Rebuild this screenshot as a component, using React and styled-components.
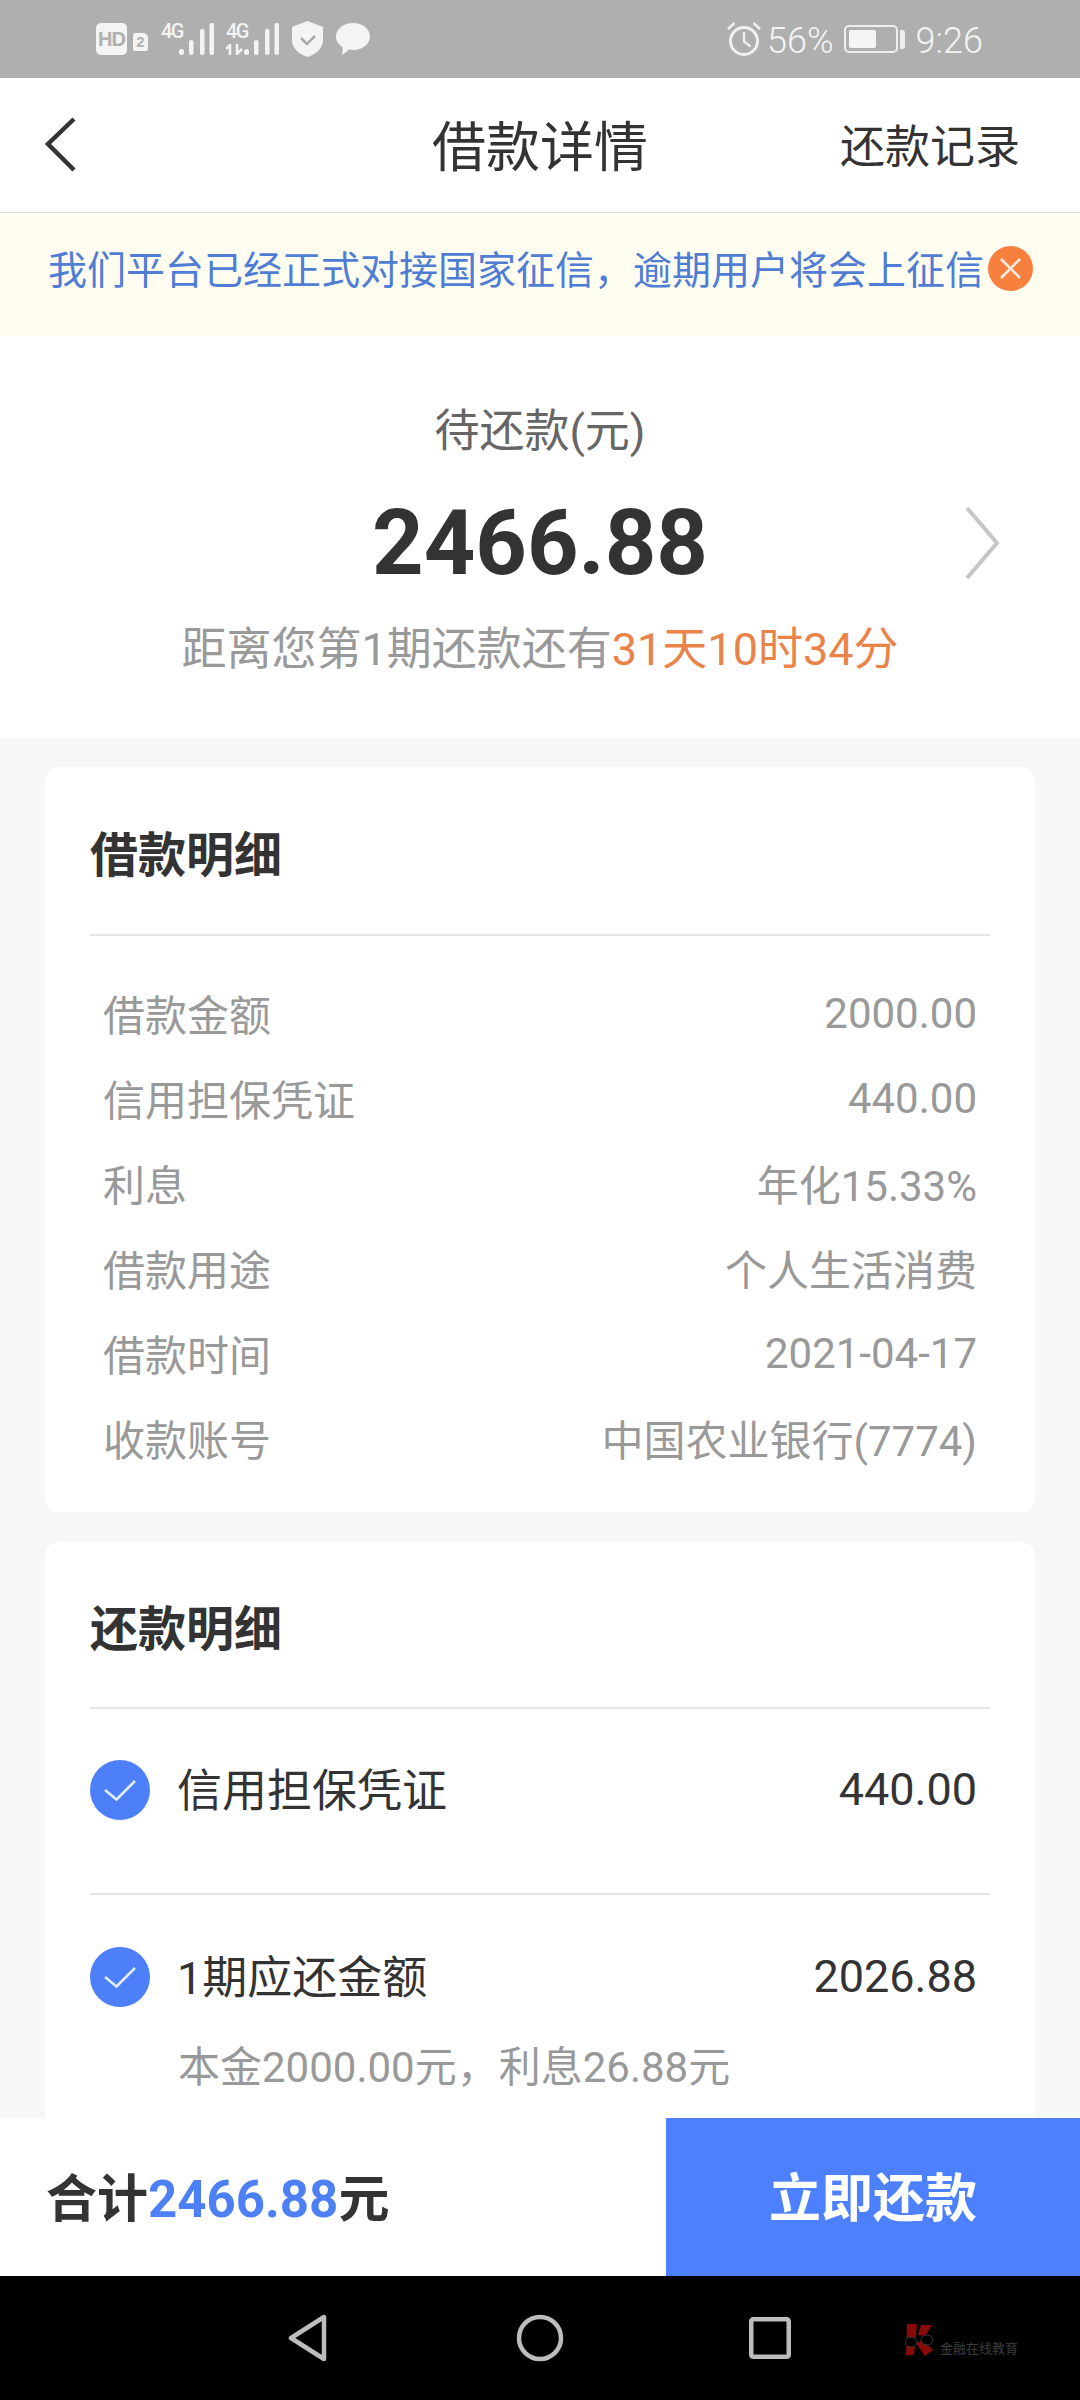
import React from 'react';
import styled, { createGlobalStyle } from 'styled-components';

const FONT = `Roboto, "Noto Sans CJK SC", sans-serif`;

const GlobalStyle = createGlobalStyle`
  html, body {
    margin: 0;
    padding: 0;
    background: #f7f7f7;
  }
  * {
    box-sizing: border-box;
  }
`;

const Page = styled.div`
  width: 1080px;
  height: 2400px;
  display: flex;
  flex-direction: column;
  overflow: hidden;
  font-family: ${FONT};
  background: #f7f7f7;
`;

/* status bar */
const StatusBar = styled.div`
  flex: none;
  height: 78px;
  padding: 0 97px 0 96px;
  display: flex;
  align-items: center;
  justify-content: space-between;
  background: #afafaf;
  color: #f4f4f4;
`;

const StatusGroup = styled.div`
  display: flex;
  align-items: center;
`;

const HdBadge = styled.span`
  width: 31px;
  height: 32px;
  border-radius: 5px;
  background: #f4f4f4;
  color: #afafaf;
  font: 700 20px/32px "Liberation Sans", sans-serif;
  text-align: center;
  letter-spacing: -1px;
`;

const SimBadge = styled.span`
  width: 15px;
  height: 18px;
  margin: 6px 13px 0 6px;
  border-radius: 2px 5px 2px 2px;
  background: #f4f4f4;
  color: #afafaf;
  font: 700 15px/18px "Liberation Sans", sans-serif;
  text-align: center;
`;

const SignalWrap = styled.div`
  display: flex;
  margin-left: ${p => p.$gap || 0}px;
`;

const NetLabel = styled.div`
  width: 18px;
  height: 33px;
  display: flex;
  flex-direction: column;
`;

const NetText = styled.span`
  font-size: 20px;
  line-height: 16px;
  font-weight: 500;
  letter-spacing: -1.5px;
  white-space: nowrap;
`;

const NetArrows = styled.svg`
  display: block;
  margin-top: 5px;
`;

const StatusIcon = styled.svg`
  display: block;
  flex: none;
  margin-left: ${p => p.$gap || 0}px;
`;

const BatteryText = styled.span`
  margin: 3px 10px 0 5px;
  font-size: 36px;
  line-height: 44px;
  font-weight: 300;
`;

const Battery = styled.div`
  width: 54px;
  height: 28px;
  padding: 3px;
  border: 2px solid #eeeeee;
  border-radius: 5px;
`;

const BatteryFill = styled.div`
  width: ${p => p.$level}%;
  height: 100%;
  background: #f4f4f4;
  border-radius: 2px;
`;

const BatteryNub = styled.div`
  width: 5px;
  height: 19px;
  margin-left: 2px;
  background: #f0f0f0;
  border-radius: 0 3px 3px 0;
`;

const Clock = styled.span`
  margin: 3px 0 0 11px;
  font-size: 36px;
  line-height: 44px;
  font-weight: 300;
`;

/* top bar */
const Header = styled.header`
  flex: none;
  height: 135px;
  display: grid;
  grid-template-columns: 1fr auto 1fr;
  align-items: center;
  background: #fff;
  border-bottom: 1px solid #dcdcdc;
`;

const BackIcon = styled.svg`
  display: block;
  margin-left: 44px;
`;

const Title = styled.h1`
  margin: 8px 0 0;
  font-size: 54px;
  line-height: 70px;
  font-weight: 400;
  color: #333;
`;

const RecordLink = styled.span`
  justify-self: end;
  margin: 6px 60px 0 0;
  font-size: 45px;
  line-height: 60px;
  color: #333;
`;

/* notice */
const Notice = styled.div`
  flex: none;
  height: 122px;
  padding: 0 0 12px 48px;
  display: flex;
  align-items: center;
  background: #fffdf0;
`;

const NoticeText = styled.span`
  margin-top: 5px;
  font-size: 39px;
  line-height: 50px;
  color: #4f7dd4;
`;

const CloseIcon = styled.svg`
  display: block;
  flex: none;
  margin-left: 4px;
`;

/* amount summary */
const Summary = styled.section`
  flex: none;
  position: relative;
  height: 403px;
  padding-top: 69px;
  display: flex;
  flex-direction: column;
  align-items: center;
  background: #fff;
`;

const SummaryLabel = styled.div`
  font-size: 45px;
  line-height: 56px;
  color: #666;
`;

const Amount = styled.div`
  margin-top: 29px;
  font-size: 90px;
  line-height: 110px;
  font-weight: 700;
  color: #333;
`;

const Countdown = styled.div`
  margin-top: 21px;
  font-size: 45px;
  line-height: 60px;
  color: #999;
`;

const CountdownValue = styled.span`
  color: #e9834a;
`;

const ForwardIcon = styled.svg`
  position: absolute;
  left: 964px;
  top: 170px;
`;

/* cards */
const Content = styled.main`
  flex: 1;
  min-height: 0;
  overflow: hidden;
  padding: 29px 45px 0;
  display: flex;
  flex-direction: column;
  gap: 30px;
`;

const Card = styled.section`
  flex: none;
  padding: 0 45px;
  background: #fff;
  border-radius: 14px;
`;

const CardTitle = styled.h2`
  margin: 0;
  height: ${p => p.$height}px;
  padding-top: 10px;
  display: flex;
  align-items: center;
  border-bottom: 2px solid #e5e5e5;
  font-size: 48px;
  line-height: 60px;
  font-weight: 700;
  color: #333;
`;

const DetailList = styled.div`
  padding: 38px 13px 28px;
`;

const DetailRow = styled.div`
  height: 85px;
  display: flex;
  align-items: center;
  justify-content: space-between;
  font-size: 42px;
  line-height: 56px;
  color: #999;
`;

/* plain numbers sit a little higher than the CJK text beside them */
const DetailValue = styled.span`
  margin-bottom: ${p => (p.$numeric ? '6px' : '0')};
`;

const RepayRow = styled.div`
  padding: ${p => (p.$last ? '52px' : '51px')} 13px 0 0;
  min-height: ${p => (p.$last ? 'auto' : '186px')};
  border-bottom: ${p => (p.$last ? 'none' : '2px solid #e5e5e5')};
`;

const RepayLine = styled.div`
  display: flex;
  align-items: center;
  font-size: 45px;
  line-height: 60px;
  color: #333;
`;

const CheckIcon = styled.svg`
  display: block;
  flex: none;
  margin-right: 27px;
`;

const RepayLabel = styled.span`
  padding-top: 4px;
  line-height: 56px;
`;

const RepayValue = styled.span`
  margin-left: auto;
`;

const RepaySub = styled.div`
  margin: 33px 0 0 88px;
  padding-bottom: 60px;
  font-size: 42px;
  line-height: 56px;
  color: #999;
`;

/* footer */
const Footer = styled.footer`
  flex: none;
  height: 158px;
  display: flex;
  background: #fff;
`;

const Total = styled.div`
  flex: 1;
  padding: 5px 0 0 46px;
  display: flex;
  align-items: center;
  font-size: 51px;
  line-height: 60px;
  font-weight: 700;
  color: #333;
`;

const TotalValue = styled.span`
  color: #4d80f5;
`;

const PayButton = styled.button`
  width: 414px;
  border: 0;
  padding: 5px 0 0;
  background: #4d80ff;
  color: #fff;
  font: 700 52px/60px ${FONT};
`;

/* android nav */
const NavBar = styled.nav`
  flex: none;
  height: 124px;
  padding-left: 195px;
  display: flex;
  align-items: center;
  background: #000;
`;

const NavSlot = styled.div`
  width: 230px;
  display: flex;
  justify-content: center;
`;

const Watermark = styled.div`
  margin: 4px 0 0 20px;
  display: flex;
  align-items: flex-end;
  gap: 6px;
`;

const WatermarkText = styled.span`
  font-size: 13px;
  line-height: 16px;
  color: #3e3e3e;
  margin-bottom: -1px;
`;

const Signal = ({ arrows, gap }) => (
  <SignalWrap $gap={gap}>
    <NetLabel>
      <NetText>4G</NetText>
      {arrows && (
        <NetArrows width="18" height="11" viewBox="0 0 18 11">
          <path d="M4 11V1L0 5M11 0v10l5-5" fill="none" stroke="#f4f4f4" strokeWidth="2.500" />
        </NetArrows>
      )}
    </NetLabel>
    <StatusIcon width="35" height="33" viewBox="0 0 35 33">
      <g fill="#f4f4f4">
        <rect x="0" y="26" width="5" height="6" rx="2.500" />
        <rect x="10" y="17" width="4.500" height="15" rx="2" />
        <rect x="21" y="6" width="4.500" height="26" rx="2" />
        <rect x="30.500" y="0" width="4.500" height="32" rx="2" />
      </g>
    </StatusIcon>
  </SignalWrap>
);

const Check = () => (
  <CheckIcon width="60" height="60" viewBox="0 0 60 60">
    <circle cx="30" cy="30" r="30" fill="#4d80f8" />
    <path d="M15 30l11.500 9.500L45 21" fill="none" stroke="#e4ecff" strokeWidth="2.500" />
  </CheckIcon>
);

const details = [
  ['借款金额', '2000.00'],
  ['信用担保凭证', '440.00'],
  ['利息', '年化15.33%'],
  ['借款用途', '个人生活消费'],
  ['借款时间', '2021-04-17'],
  ['收款账号', '中国农业银行(7774)'],
];

export default function App() {
  return (
    <Page>
      <GlobalStyle />
      <StatusBar>
        <StatusGroup>
          <HdBadge>HD</HdBadge>
          <SimBadge>2</SimBadge>
          <Signal />
          <Signal arrows gap={12} />
          <StatusIcon $gap={13} width="31" height="36" viewBox="0 0 31 36">
            <path d="M15.500 0L31 6v13c0 8-6.500 14-15.500 17C6.500 33 0 27 0 19V6z" fill="#f4f4f4" />
            <path d="M9 17l6 6 8-8" fill="none" stroke="#a9a9a9" strokeWidth="2.500" />
          </StatusIcon>
          <StatusIcon $gap={13} width="34" height="32" viewBox="0 0 34 32">
            <path d="M17 0c9.500 0 17 6 17 13.500S26.500 27 17 27c-1.500 0-3-.2-4.300-.5C10.500 29 8 31 5.500 32c1-2 1.500-5 1-8C2.500 21.500 0 18 0 13.500 0 6 7.500 0 17 0z" fill="#f4f4f4" />
          </StatusIcon>
        </StatusGroup>
        <StatusGroup>
          <StatusIcon width="36" height="36" viewBox="0 0 36 36">
            <g fill="none" stroke="#f0f0f0" strokeWidth="3">
              <circle cx="18" cy="20" r="13.500" />
              <path d="M18 11v9.500l6.500 5M2 8l6.500-6M34 8l-6.500-6" strokeWidth="2.500" />
            </g>
          </StatusIcon>
          <BatteryText>56%</BatteryText>
          <Battery>
            <BatteryFill $level={63} />
          </Battery>
          <BatteryNub />
          <Clock>9:26</Clock>
        </StatusGroup>
      </StatusBar>

      <Header>
        <BackIcon width="34" height="58" viewBox="0 0 34 58">
          <path d="M30 3L4 28l26 26" fill="none" stroke="#333" strokeWidth="4.500" />
        </BackIcon>
        <Title>借款详情</Title>
        <RecordLink>还款记录</RecordLink>
      </Header>

      <Notice>
        <NoticeText>我们平台已经正式对接国家征信，逾期用户将会上征信</NoticeText>
        <CloseIcon width="45" height="45" viewBox="0 0 45 45">
          <circle cx="22.500" cy="22.500" r="22.500" fill="#f8803f" />
          <path d="M13 13l19 19M32 13L13 32" stroke="#ffeee4" strokeWidth="2.500" />
        </CloseIcon>
      </Notice>

      <Summary>
        <SummaryLabel>待还款(元)</SummaryLabel>
        <Amount>2466.88</Amount>
        <Countdown>
          距离您第1期还款还有<CountdownValue>31天10时34分</CountdownValue>
        </Countdown>
        <ForwardIcon width="36" height="76" viewBox="0 0 36 76">
          <path d="M3 3l30 35L3 73" fill="none" stroke="#c6c6c6" strokeWidth="4" />
        </ForwardIcon>
      </Summary>

      <Content>
        <Card>
          <CardTitle $height={169}>借款明细</CardTitle>
          <DetailList>
            {details.map(([label, value]) => (
              <DetailRow key={label}>
                <span>{label}</span>
                <DetailValue $numeric={/^[\d.-]+$/.test(value)}>{value}</DetailValue>
              </DetailRow>
            ))}
          </DetailList>
        </Card>
        <Card>
          <CardTitle $height={167}>还款明细</CardTitle>
          <RepayRow>
            <RepayLine>
              <Check />
              <RepayLabel>信用担保凭证</RepayLabel>
              <RepayValue>440.00</RepayValue>
            </RepayLine>
          </RepayRow>
          <RepayRow $last>
            <RepayLine>
              <Check />
              <RepayLabel>1期应还金额</RepayLabel>
              <RepayValue>2026.88</RepayValue>
            </RepayLine>
            <RepaySub>本金2000.00元，利息26.88元</RepaySub>
          </RepayRow>
        </Card>
      </Content>

      <Footer>
        <Total>
          合计<TotalValue>2466.88</TotalValue>元
        </Total>
        <PayButton>立即还款</PayButton>
      </Footer>

      <NavBar>
        <NavSlot>
          <svg width="44" height="50" viewBox="0 0 44 50">
            <path d="M36 4v42L3 25z" fill="none" stroke="#bdbdbd" strokeWidth="4.500" strokeLinejoin="round" />
          </svg>
        </NavSlot>
        <NavSlot>
          <svg width="48" height="48" viewBox="0 0 48 48">
            <circle cx="24" cy="24" r="21" fill="none" stroke="#bdbdbd" strokeWidth="4.500" />
          </svg>
        </NavSlot>
        <NavSlot>
          <svg width="42" height="42" viewBox="0 0 42 42">
            <rect x="2.250" y="2.250" width="37.500" height="37.500" rx="2" fill="none" stroke="#bdbdbd" strokeWidth="4.500" />
          </svg>
        </NavSlot>
        <Watermark>
          <svg width="29" height="32" viewBox="0 0 29 32">
            <path d="M2 0h10l-3 31H1zM16 1h11l-7 11-7-1zM11 19l7-3 10 10-8 6z" fill="#8a0a0a" />
            <ellipse cx="6" cy="18" rx="6" ry="5" fill="#000" stroke="#3a3a3a" />
            <ellipse cx="22" cy="16" rx="6" ry="5" fill="#000" stroke="#3a3a3a" />
          </svg>
          <WatermarkText>金融在线教育</WatermarkText>
        </Watermark>
      </NavBar>
    </Page>
  );
}
